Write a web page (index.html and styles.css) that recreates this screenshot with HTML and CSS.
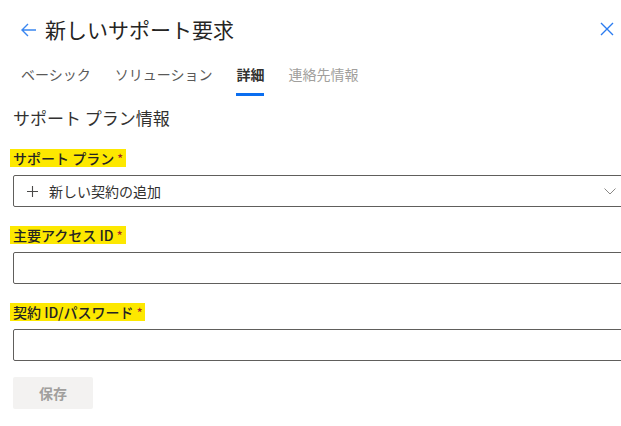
FILE: index.html
```html
<!DOCTYPE html>
<html lang="ja">
<head>
<meta charset="utf-8">
<link rel="stylesheet" href="styles.css">
</head>
<body>
<div class="panel">
  <header class="header">
    <svg class="back" width="16" height="14" viewBox="0 0 16 14"><path d="M7 1 L1 7 L7 13 M1 7 H15" fill="none" stroke="#3a86f0" stroke-width="1.4"/></svg>
    <h1 class="title">新しいサポート要求</h1>
    <svg class="close" width="14" height="14" viewBox="0 0 14 14"><path d="M1 1 L13 13 M13 1 L1 13" fill="none" stroke="#2b7cf0" stroke-width="1.4"/></svg>
  </header>
  <nav class="tabs">
    <span class="tab">ベーシック</span>
    <span class="tab">ソリューション</span>
    <span class="tab active">詳細</span>
    <span class="tab disabled">連絡先情報</span>
  </nav>
  <main class="form">
    <h2 class="section">サポート プラン情報</h2>
    <div class="field">
      <label class="label"><span class="hl">サポート プラン <span class="req">*</span></span></label>
      <div class="select">
        <svg class="plus" width="11" height="11" viewBox="0 0 11 11"><path d="M5.5 0 V11 M0 5.5 H11" fill="none" stroke="#4a4948" stroke-width="1.1"/></svg>
        <span class="select-text">新しい契約の追加</span>
        <svg class="chev" width="12" height="7" viewBox="0 0 12 7"><path d="M0.5 0.5 L6 6 L11.5 0.5" fill="none" stroke="#8a8886" stroke-width="1"/></svg>
      </div>
    </div>
    <div class="field">
      <label class="label"><span class="hl">主要アクセス ID <span class="req">*</span></span></label>
      <div class="input"></div>
    </div>
    <div class="field">
      <label class="label"><span class="hl">契約 ID/パスワード <span class="req">*</span></span></label>
      <div class="input"></div>
    </div>
    <button class="save">保存</button>
  </main>
</div>
</body>
</html>
```
FILE: styles.css
```css
* { box-sizing: border-box; }
html, body { margin: 0; padding: 0; background: #fff; overflow: hidden; }
body {
  font-family: "Noto Sans CJK JP", "Noto Sans", sans-serif;
  color: #323130;
  width: 621px;
  height: 426px;
}
.panel { width: 621px; }
.header {
  display: flex;
  align-items: center;
  height: 58px;
  padding: 0 7px 0 21px;
}
.back { flex: none; margin-right: 8px; margin-top: 1px; }
.title {
  margin: 0;
  font-size: 21px;
  font-weight: 400;
  color: #252423;
  flex: 1;
  line-height: 28px;
}
.close { flex: none; margin-top: 0; }
.tabs {
  display: flex;
  gap: 24px;
  padding-left: 21px;
  height: 40px;
}
.tab {
  font-size: 14px;
  color: #5a5958;
  line-height: 20px;
  padding-top: 6px;
  height: 38px;
}
.tab.active {
  color: #323130;
  font-weight: 700;
  border-bottom: 3px solid #0a6ef0;
  height: 38px;
}
.tab.disabled { color: #a19f9d; }
.form { padding: 0 0 0 13px; }
.section {
  margin: 8px 0 0;
  font-size: 17px;
  font-weight: 400;
  line-height: 24px;
  color: #323130;
}
.field { margin-top: 19px; }
.field + .field { margin-top: 19px; }
.label {
  display: block;
  font-size: 14px;
  font-weight: 500;
  line-height: 18px;
  color: #252423;
  margin-bottom: 8px;
}
.hl {
  background: #fde800;
  padding: 0 3px;
  margin-left: -3px;
  display: inline-block;
  line-height: 18px;
}
.req { color: #a4262c; font-size: 12px; vertical-align: top; }
.select, .input {
  width: 640px;
  height: 32px;
  border: 1px solid #605e5c;
  border-radius: 2px;
  background: #fff;
}
.select {
  display: flex;
  align-items: center;
  padding-left: 13px;
  font-size: 14px;
  color: #323130;
}
.plus { flex: none; margin-right: 11px; }
.select-text { flex: none; width: 555px; }
.chev { flex: none; }
.save {
  display: block;
  margin-top: 16px;
  width: 80px;
  height: 32px;
  border: none;
  border-radius: 2px;
  background: #f3f2f1;
  color: #a19f9d;
  font-family: inherit;
  font-size: 14px;
  font-weight: 700;
}
```
